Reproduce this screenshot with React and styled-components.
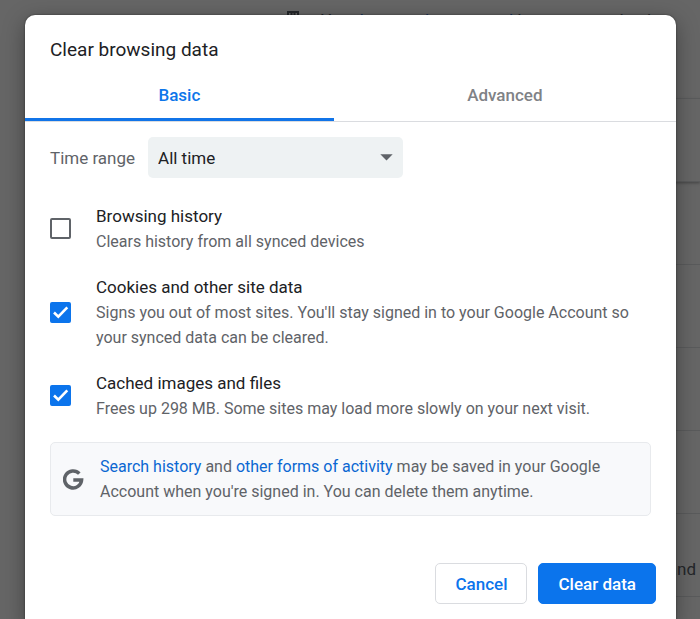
import React, { useState } from "react";
import styled, { createGlobalStyle } from "styled-components";

const GlobalStyle = createGlobalStyle`
  *, *::before, *::after { box-sizing: border-box; }
  body {
    margin: 0;
    overflow: hidden;
    font-family: Roboto, "Liberation Sans", sans-serif;
    font-size: 17px;
    line-height: 26px;
    color: #202124;
    background: #666666;
  }
  button, select, input { font: inherit; }
`;

const Page = styled.div`
  display: grid;
  height: 100vh;
  overflow: hidden;

  > * {
    grid-area: 1 / 1;
  }
`;

const SettingsPage = styled.div`
  color: #24272a;
  overflow: hidden;
`;

const ManagedNotice = styled.p`
  display: flex;
  align-items: flex-start;
  gap: 22px;
  margin: 0;
  padding: 10px 0 0 287px;
  height: 98px;
  white-space: nowrap;
  line-height: 20px;

  a {
    color: #10305c;
    text-decoration: none;
  }
`;

const SettingsRow = styled.div`
  display: flex;
  align-items: flex-end;
  justify-content: flex-end;
  height: 83px;
  margin-left: 50%;
  padding: 0 4px 14px 0;
  border-top: 1px solid #5a5b5c;
  box-shadow: ${({ $raised }) => ($raised ? "0 2px 3px rgba(0, 0, 0, 0.35)" : "none")};
`;

const Dialog = styled.section`
  display: flex;
  flex-direction: column;
  margin: 15px 24px 0 25px;
  background: #ffffff;
  border-radius: 10px 10px 0 0;
  box-shadow: 0 0 2px rgba(0, 0, 0, 0.5), 0 6px 22px rgba(0, 0, 0, 0.36);
  z-index: 1;
`;

const Title = styled.h1`
  margin: 0;
  padding: 22px 25px 0;
  font-size: 19px;
  font-weight: 400;
  line-height: 26px;
`;

const TabList = styled.div`
  display: flex;
  height: 59px;
  border-bottom: 1px solid #dadce0;
`;

const Tab = styled.button`
  flex: 1 1 auto;
  padding: 8px 0 0;
  border: 0;
  border-bottom: 3px solid ${({ $active }) => ($active ? "#1174e8" : "transparent")};
  border-radius: 0;
  background: none;
  color: ${({ $active }) => ($active ? "#0d76ea" : "#7f8286")};
  font-weight: 500;
  cursor: pointer;
`;

const Body = styled.div`
  display: flex;
  flex-direction: column;
  padding: 15px 25px 0 25px;
`;

const TimeRange = styled.div`
  display: flex;
  align-items: center;
  gap: 13px;
  color: #5f6368;
`;

const SelectBox = styled.div`
  display: grid;
  align-items: center;
  width: 255px;

  > * {
    grid-area: 1 / 1;
  }

  svg {
    justify-self: end;
    margin-right: 10px;
    pointer-events: none;
  }
`;

const Select = styled.select`
  appearance: none;
  height: 41px;
  padding: 0 32px 0 10px;
  border: 0;
  border-radius: 5px;
  background: #eef2f3;
  color: #202124;
`;

const OptionList = styled.div`
  display: flex;
  flex-direction: column;
  gap: 20px;
  margin-top: 25px;
`;

const Option = styled.label`
  display: flex;
  align-items: center;
  gap: 25px;
  cursor: pointer;
`;

const Tick = styled.span`
  display: grid;
  flex: none;
  width: 21px;
  height: 21px;

  > * {
    grid-area: 1 / 1;
  }

  svg {
    pointer-events: none;
  }
`;

const Checkbox = styled.input`
  appearance: none;
  width: 21px;
  height: 21px;
  margin: 0;
  border: 2px solid #5f6368;
  border-radius: 2px;

  &:checked {
    border-color: #0b74ec;
    background: #0b74ec;
  }
`;

const OptionText = styled.span`
  display: flex;
  flex-direction: column;
`;

const OptionTitle = styled.span`
  color: #202124;
`;

const OptionDetail = styled.span`
  color: #5f6368;
  font-size: 16px;
  line-height: 25px;
`;

const Notice = styled.aside`
  display: flex;
  align-items: center;
  gap: 16px;
  margin-top: 21px;
  padding: 11px 20px 11px 12px;
  border: 1px solid #e8eaed;
  border-radius: 5px;
  background: #f8f9fb;
  color: #5f6368;

  svg {
    flex: none;
  }

  p {
    margin: 0;
    font-size: 16px;
    line-height: 25px;
  }
`;

const Link = styled.a`
  color: #0b67d2;
  text-decoration: none;
`;

const Actions = styled.footer`
  display: flex;
  justify-content: flex-end;
  gap: 11px;
  padding: 47px 20px 20px;
`;

const Button = styled.button`
  height: 41px;
  padding: 0 19px;
  border: 1px solid ${({ $primary }) => ($primary ? "#0b74ec" : "#dadce0")};
  border-radius: 5px;
  background: ${({ $primary }) => ($primary ? "#0b74ec" : "#ffffff")};
  color: ${({ $primary }) => ($primary ? "#ffffff" : "#0b74ec")};
  font-weight: 500;
  cursor: pointer;
`;

const BuildingIcon = () => (
  <svg width="12" height="16" viewBox="0 0 12 16" fill="none" stroke="#24272a" strokeWidth="2" aria-hidden="true">
    <path d="M1 16V2h10v14M4.500 2v14M7.500 2v14" />
  </svg>
);

const CaretIcon = () => (
  <svg width="13" height="7" viewBox="0 0 13 7" aria-hidden="true">
    <path d="M0.300 0.300h12.400L6.500 6.500z" fill="#5f6368" />
  </svg>
);

const CheckIcon = () => (
  <svg width="21" height="21" viewBox="0 0 21 21" aria-hidden="true">
    <path d="M4 10.500l4.300 4.200 9-9.300" fill="none" stroke="#ffffff" strokeWidth="2.600" />
  </svg>
);

const GoogleIcon = () => (
  <svg width="21" height="21" viewBox="0 0 21 21" aria-hidden="true">
    <path d="M16.300 4.600A8.500 8.500 0 1 0 18.600 10.900H10.300" fill="none" stroke="#5f6368" strokeWidth="3.500" />
  </svg>
);

const initialOptions = [
  {
    id: "history",
    title: "Browsing history",
    detail: "Clears history from all synced devices",
    checked: false,
  },
  {
    id: "cookies",
    title: "Cookies and other site data",
    detail:
      "Signs you out of most sites. You'll stay signed in to your Google Account so your synced data can be cleared.",
    checked: true,
  },
  {
    id: "cache",
    title: "Cached images and files",
    detail: "Frees up 298 MB. Some sites may load more slowly on your next visit.",
    checked: true,
  },
];

const rows = [
  { id: 1, raised: true },
  { id: 2 },
  { id: 3 },
  { id: 4 },
  { id: 5 },
  { id: 6, text: "and" },
  { id: 7 },
];

export default function App() {
  const [tab, setTab] = useState("Basic");
  const [options, setOptions] = useState(initialOptions);

  const toggle = (id) =>
    setOptions((list) => list.map((o) => (o.id === id ? { ...o, checked: !o.checked } : o)));

  return (
    <>
      <GlobalStyle />
      <Page>
        <SettingsPage aria-hidden="true">
          <ManagedNotice>
            <BuildingIcon />
            <span>
              Your <a href="#managed" tabIndex={-1}>browser is managed</a> by your organization
            </span>
          </ManagedNotice>
          {rows.map((row) => (
            <SettingsRow key={row.id} $raised={row.raised}>
              {row.text}
            </SettingsRow>
          ))}
        </SettingsPage>
        <Dialog role="dialog" aria-labelledby="dialog-title">
          <Title id="dialog-title">Clear browsing data</Title>
          <TabList role="tablist">
            {["Basic", "Advanced"].map((name) => (
              <Tab
                key={name}
                type="button"
                role="tab"
                aria-selected={tab === name}
                $active={tab === name}
                onClick={() => setTab(name)}
              >
                {name}
              </Tab>
            ))}
          </TabList>
          <Body>
            <TimeRange>
              <label htmlFor="time-range">Time range</label>
              <SelectBox>
                <Select id="time-range" defaultValue="All time">
                  <option>Last hour</option>
                  <option>Last 24 hours</option>
                  <option>Last 7 days</option>
                  <option>Last 4 weeks</option>
                  <option>All time</option>
                </Select>
                <CaretIcon />
              </SelectBox>
            </TimeRange>
            <OptionList>
              {options.map((o) => (
                <Option key={o.id} htmlFor={o.id}>
                  <Tick>
                    <Checkbox id={o.id} type="checkbox" checked={o.checked} onChange={() => toggle(o.id)} />
                    {o.checked && <CheckIcon />}
                  </Tick>
                  <OptionText>
                    <OptionTitle>{o.title}</OptionTitle>
                    <OptionDetail>{o.detail}</OptionDetail>
                  </OptionText>
                </Option>
              ))}
            </OptionList>
            <Notice>
              <GoogleIcon />
              <p>
                <Link href="#search-history">Search history</Link> and{" "}
                <Link href="#activity">other forms of activity</Link> may be saved in your Google Account
                when you're signed in. You can delete them anytime.
              </p>
            </Notice>
          </Body>
          <Actions>
            <Button type="button">Cancel</Button>
            <Button type="button" $primary>
              Clear data
            </Button>
          </Actions>
        </Dialog>
      </Page>
    </>
  );
}
